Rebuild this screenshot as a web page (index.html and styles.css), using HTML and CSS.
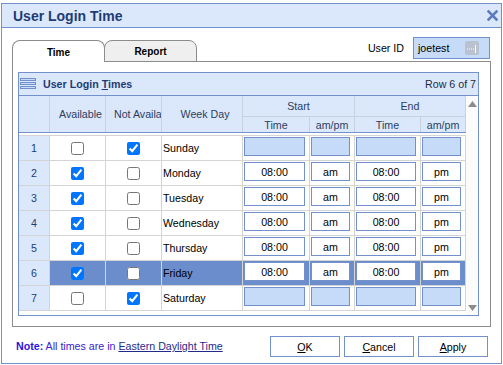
FILE: index.html
```html
<!DOCTYPE html>
<html lang="en">
<head>
    <meta charset="UTF-8">
    <title>User Login Time</title>
    <link rel="stylesheet" href="styles.css">
</head>
<body>
    <div class="window">
        <div class="titlebar">
            <h1>User Login Time</h1>
            <svg class="close" width="11" height="11" viewBox="0 0 11 11">
                <path d="M1.5 1.5 L9.5 9.5 M9.5 1.5 L1.5 9.5" stroke="#5b7bbf" stroke-width="2.6" stroke-linecap="square"/>
            </svg>
        </div>

        <div class="topbar">
            <div class="tabs">
                <div class="tab active">Time</div>
                <div class="tab">Report</div>
            </div>
            <div class="userid">
                <span>User ID</span>
                <div class="userid-box">
                    <span>joetest</span>
                    <svg width="14" height="14" viewBox="0 0 14 14">
                        <rect x="0" y="0" width="14" height="14" rx="2" fill="#b9c2ce"/>
                        <path d="M2 8h1M4 8h1M6 8h1M8 8h1" stroke="#fff" stroke-width="1"/>
                        <path d="M10.5 4v8" stroke="#fff" stroke-width="1"/>
                    </svg>
                </div>
            </div>
        </div>

        <div class="pane">
            <div class="grid">
                <div class="grid-caption">
                    <svg width="16" height="12" viewBox="0 0 16 12">
                        <rect x="0.5" y="0.5" width="15" height="2" fill="#c6dbf7" stroke="#7190cc"/>
                        <rect x="0.5" y="4.5" width="15" height="2" fill="#c6dbf7" stroke="#7190cc"/>
                        <rect x="0.5" y="8.5" width="15" height="2" fill="#c6dbf7" stroke="#7190cc"/>
                    </svg>
                    <span class="caption-title">User Login <u>T</u>imes</span>
                    <span class="caption-count">Row 6 of 7</span>
                </div>
                <div class="grid-main">
                    <div class="grid-table">
                        <div class="grid-head">
                            <div class="hc tall"></div>
                            <div class="hc tall">Available</div>
                            <div class="hc tall">Not Available</div>
                            <div class="hc tall">Week Day</div>
                            <div class="hc group">Start</div>
                            <div class="hc group">End</div>
                            <div class="hc">Time</div>
                            <div class="hc">am/pm</div>
                            <div class="hc">Time</div>
                            <div class="hc">am/pm</div>
                        </div>
                        <div class="grid-body">
                            <div class="row">
                                <div class="c num">1</div>
                                <div class="c"><input type="checkbox"></div>
                                <div class="c"><input type="checkbox" checked></div>
                                <div class="c day">Sunday</div>
                                <div class="c inp"><div class="box off"></div></div>
                                <div class="c inp"><div class="box off"></div></div>
                                <div class="c inp"><div class="box off"></div></div>
                                <div class="c inp"><div class="box off"></div></div>
                            </div>
                            <div class="row">
                                <div class="c num">2</div>
                                <div class="c"><input type="checkbox" checked></div>
                                <div class="c"><input type="checkbox"></div>
                                <div class="c day">Monday</div>
                                <div class="c inp"><div class="box">08:00</div></div>
                                <div class="c inp"><div class="box">am</div></div>
                                <div class="c inp"><div class="box">08:00</div></div>
                                <div class="c inp"><div class="box">pm</div></div>
                            </div>
                            <div class="row">
                                <div class="c num">3</div>
                                <div class="c"><input type="checkbox" checked></div>
                                <div class="c"><input type="checkbox"></div>
                                <div class="c day">Tuesday</div>
                                <div class="c inp"><div class="box">08:00</div></div>
                                <div class="c inp"><div class="box">am</div></div>
                                <div class="c inp"><div class="box">08:00</div></div>
                                <div class="c inp"><div class="box">pm</div></div>
                            </div>
                            <div class="row">
                                <div class="c num">4</div>
                                <div class="c"><input type="checkbox" checked></div>
                                <div class="c"><input type="checkbox"></div>
                                <div class="c day">Wednesday</div>
                                <div class="c inp"><div class="box">08:00</div></div>
                                <div class="c inp"><div class="box">am</div></div>
                                <div class="c inp"><div class="box">08:00</div></div>
                                <div class="c inp"><div class="box">pm</div></div>
                            </div>
                            <div class="row">
                                <div class="c num">5</div>
                                <div class="c"><input type="checkbox" checked></div>
                                <div class="c"><input type="checkbox"></div>
                                <div class="c day">Thursday</div>
                                <div class="c inp"><div class="box">08:00</div></div>
                                <div class="c inp"><div class="box">am</div></div>
                                <div class="c inp"><div class="box">08:00</div></div>
                                <div class="c inp"><div class="box">pm</div></div>
                            </div>
                            <div class="row sel">
                                <div class="c num">6</div>
                                <div class="c"><input type="checkbox" checked></div>
                                <div class="c"><input type="checkbox"></div>
                                <div class="c day">Friday</div>
                                <div class="c inp"><div class="box">08:00</div></div>
                                <div class="c inp"><div class="box">am</div></div>
                                <div class="c inp"><div class="box">08:00</div></div>
                                <div class="c inp"><div class="box">pm</div></div>
                            </div>
                            <div class="row last">
                                <div class="c num">7</div>
                                <div class="c"><input type="checkbox"></div>
                                <div class="c"><input type="checkbox" checked></div>
                                <div class="c day">Saturday</div>
                                <div class="c inp"><div class="box off"></div></div>
                                <div class="c inp"><div class="box off"></div></div>
                                <div class="c inp"><div class="box off"></div></div>
                                <div class="c inp"><div class="box off"></div></div>
                            </div>
                        </div>
                    </div>
                    <div class="scrollbar">
                        <svg width="9" height="6" viewBox="0 0 9 6"><path d="M0 6 L4.5 0 L9 6 Z" fill="#8c8c8c"/></svg>
                        <svg width="9" height="6" viewBox="0 0 9 6"><path d="M0 0 L4.5 6 L9 0 Z" fill="#8c8c8c"/></svg>
                    </div>
                </div>
            </div>
        </div>

        <div class="footer">
            <div class="note"><b>Note:</b> All times are in <a href="#">Eastern Daylight Time</a></div>
            <div class="buttons">
                <button class="btn"><u>O</u>K</button>
                <button class="btn"><u>C</u>ancel</button>
                <button class="btn"><u>A</u>pply</button>
            </div>
        </div>
    </div>
</body>
</html>
```

FILE: styles.css
```css
* {
    box-sizing: border-box;
}
body {
    margin: 0;
    font-family: "Liberation Sans", Arial, sans-serif;
    font-size: 8pt;
    color: #000;
    background-color: #fff;
}
.window {
    margin: 3px 0 0 1px;
    width: 501px;
    height: 361px;
    border: 1px solid #7190cc;
    display: flex;
    flex-direction: column;
}
.titlebar {
    height: 24px;
    flex: none;
    background-color: #dbe8fc;
    border-bottom: 1px solid #7190cc;
    display: flex;
    align-items: center;
    justify-content: space-between;
    padding: 0 3px 0 11px;
}
.titlebar h1 {
    margin: 0;
    font-size: 14px;
    font-weight: bold;
    color: #1f3b73;
}
.topbar {
    display: flex;
    justify-content: space-between;
    align-items: flex-end;
    padding: 9px 11px 0 10px;
    margin-bottom: -1px;
    position: relative;
    z-index: 1;
}
.tabs {
    display: flex;
}
.tab {
    width: 93px;
    height: 22px;
    border: 1px solid #8c8c8c;
    border-radius: 8px 8px 0 0;
    background-color: #efefef;
    font-weight: bold;
    font-size: 10px;
    display: flex;
    align-items: center;
    justify-content: center;
}
.tab + .tab {
    margin-left: -1px;
}
.tab.active {
    background-color: #fff;
    border-bottom: none;
    padding-top: 1px;
}
.userid {
    display: flex;
    align-items: center;
    gap: 9px;
    margin-bottom: 3px;
}
.userid-box {
    width: 77px;
    height: 22px;
    border: 1px solid #7190cc;
    background-color: #c6dbf7;
    display: flex;
    align-items: center;
    justify-content: space-between;
    padding: 0 10px 0 4px;
}
.pane {
    margin: 0 10px;
    border: 1px solid #8c8c8c;
    padding: 10px 11px 10px 5px;
}
.grid {
    border: 1px solid #7190cc;
}
.grid-caption {
    height: 23px;
    background-color: #dbe8fc;
    border-bottom: 1px solid #7190cc;
    display: flex;
    align-items: center;
    gap: 7px;
    padding: 0 2px 0 1px;
}
.caption-title {
    font-weight: bold;
    color: #1f3b73;
}
.caption-count {
    margin-left: auto;
    color: #1c2a44;
}
.grid-main {
    display: flex;
}
.grid-table {
    width: 447px;
}
.grid-head,
.row {
    display: grid;
    grid-template-columns: 31px 56px 56px 81px 67px 45px 66px 45px;
}
.grid-head {
    grid-template-rows: 21px 15px;
    background-color: #dbe8fc;
    border-bottom: 1px solid #7190cc;
    color: #2c3e60;
}
.hc {
    border-right: 1px solid #c7d1e2;
    display: flex;
    align-items: center;
    justify-content: center;
    white-space: nowrap;
    overflow: hidden;
}
.hc.tall {
    grid-row: span 2;
    display: block;
    line-height: 36px;
    text-align: center;
    padding: 0 2px 0 8px;
}
.hc.tall:first-child {
    padding: 0;
}
.hc.group {
    grid-column: span 2;
    border-bottom: 1px solid #c7d1e2;
}
.grid-body {
    padding: 2px 0 4px;
}
.row {
    height: 25px;
    border-top: 1px solid #d4d4d4;
}
.row.last {
    height: 26px;
    border-bottom: 1px solid #d4d4d4;
}
.c {
    border-right: 1px solid #d4d4d4;
    display: flex;
    align-items: center;
    justify-content: center;
}
.c input {
    margin: 0;
    width: 13px;
    height: 13px;
}
.c.num {
    background-color: #dbe8fc;
    color: #1f3b73;
}
.c.day {
    justify-content: flex-start;
    padding-left: 1px;
}
.c.inp {
    align-items: flex-start;
    padding: 1px 4px 0 1px;
}
.box {
    width: 100%;
    height: 19px;
    border: 1px solid #7190cc;
    background-color: #fff;
    display: flex;
    align-items: center;
    justify-content: center;
}
.box.off {
    background-color: #c6dbf7;
}
.row.sel .c:not(.num) {
    background-color: #6b8dcb;
}
.scrollbar {
    width: 12px;
    background-color: #fbfbfb;
    display: flex;
    flex-direction: column;
    justify-content: space-between;
    align-items: center;
    padding: 5px 0 4px;
}
.footer {
    flex: 1;
    display: flex;
    justify-content: space-between;
    align-items: flex-start;
    padding: 9px 13px 0 14px;
}
.note {
    line-height: 21px;
    color: #3a22d0;
}
.note b {
    color: #2a12e0;
}
.note a {
    color: #1f2a8a;
}
.buttons {
    display: flex;
    gap: 4px;
}
.btn {
    width: 70px;
    height: 21px;
    border: 1px solid #7190cc;
    background-color: #fff;
    font-family: inherit;
    font-size: 8pt;
    color: #000;
    padding: 0;
}
```
